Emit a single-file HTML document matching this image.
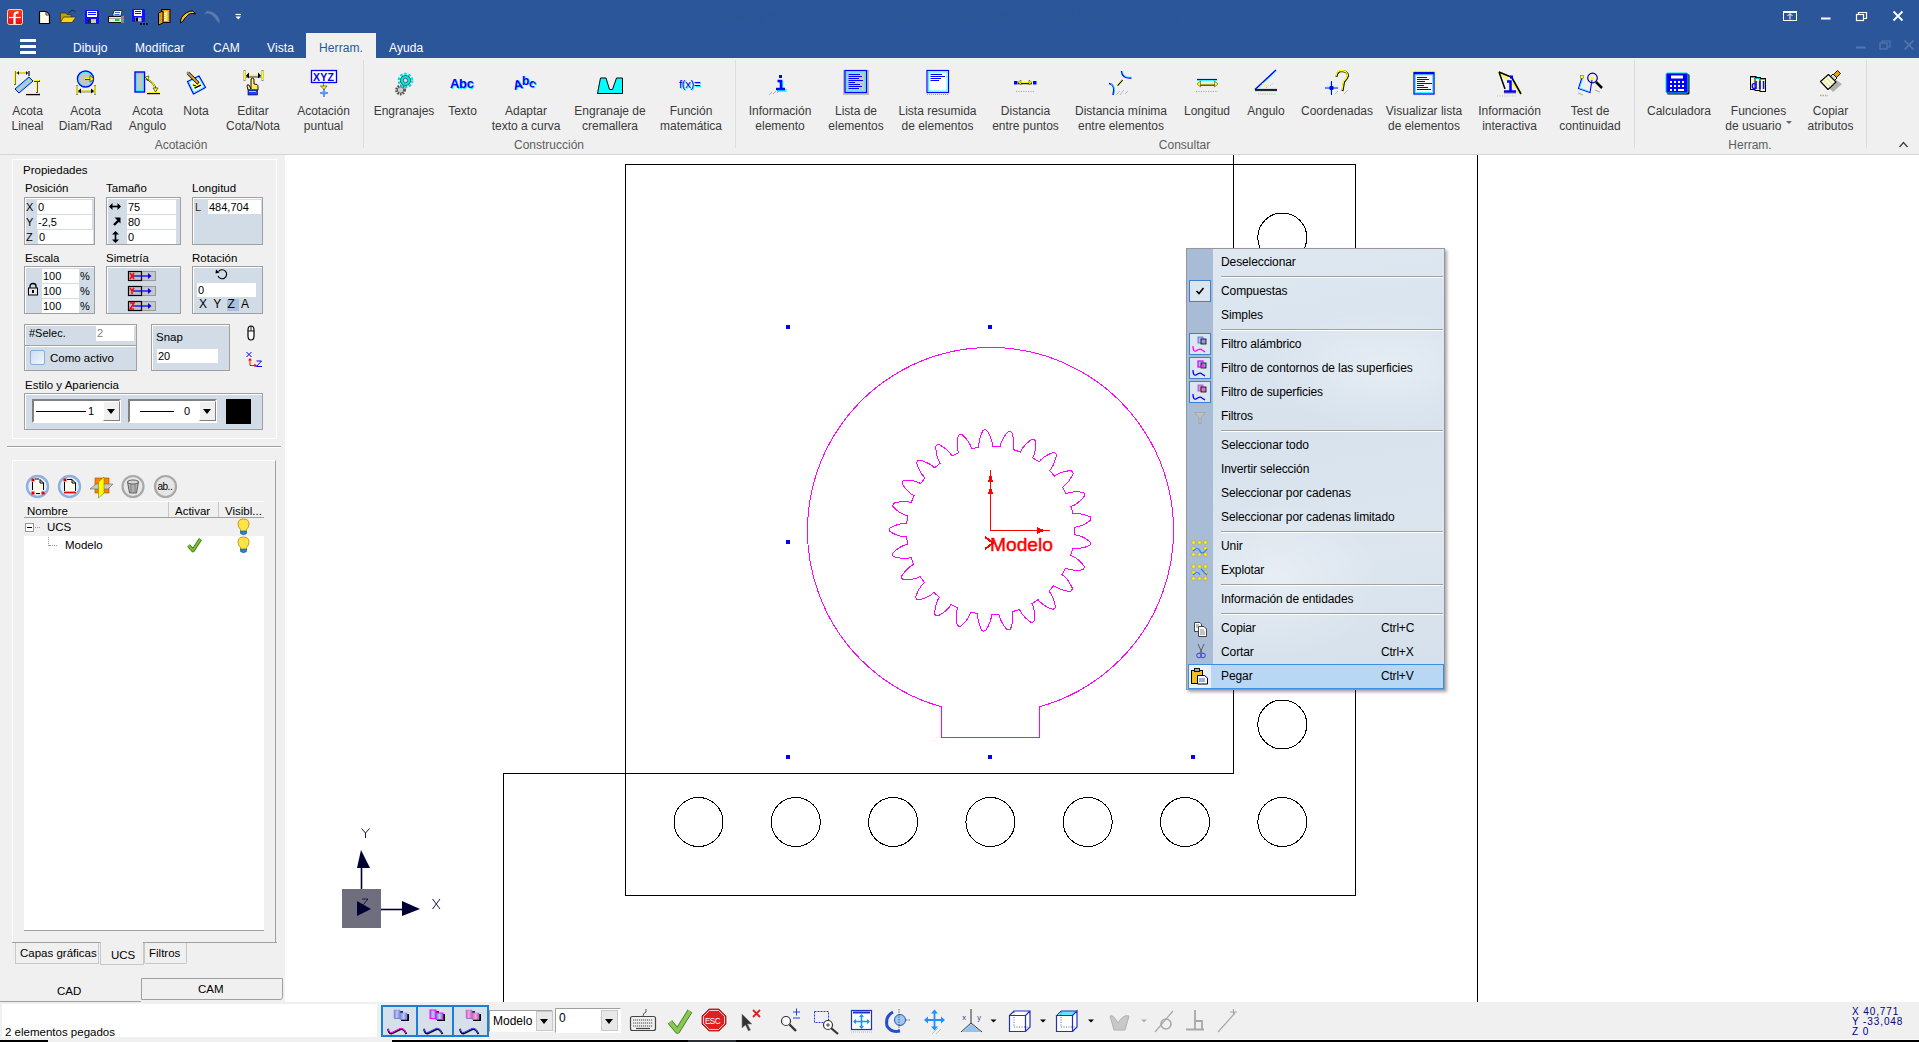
<!DOCTYPE html>
<html><head><meta charset="utf-8">
<style>
*{margin:0;padding:0;box-sizing:border-box}
html,body{width:1919px;height:1042px;overflow:hidden;background:#f0f0f0;font-family:"Liberation Sans",sans-serif;font-size:12px;color:#000;position:relative}
.a{position:absolute}
svg{overflow:visible}
#title{left:0;top:0;width:1919px;height:58px;background:#2b579a}
.mt{position:absolute;top:41px;color:#fff;font-size:12px;letter-spacing:0.1px;line-height:14px;white-space:nowrap}
#rib{left:0;top:58px;width:1919px;height:97px;background:#f0f0f0;border-bottom:1px solid #d5d5d5}
.bl{position:absolute;top:104px;color:#3a3a3a;font-size:12px;letter-spacing:0;line-height:15px;text-align:center;white-space:nowrap;width:200px;margin-left:-100px}
.gl{position:absolute;top:138px;color:#5e5e5e;font-size:12px;letter-spacing:0;line-height:14px;white-space:nowrap;text-align:center;width:200px;margin-left:-100px}
.sep{position:absolute;top:60px;width:1px;height:88px;background:#dcdcdc}
#draw{left:285px;top:155px;width:1634px;height:847px;background:#fff}
</style></head><body>
<div id="title" class="a"></div>
<div id="rib" class="a"></div>
<div id="draw" class="a"></div>

<!-- title bar icons -->
<svg class="a" style="left:0;top:0" width="260" height="58" viewBox="0 0 260 58">
<defs><linearGradient id="lg1" x1="0" y1="0" x2="0" y2="1"><stop offset="0" stop-color="#ff3a1a"/><stop offset="1" stop-color="#e01010"/></linearGradient></defs>
<rect x="7.5" y="9.5" width="15" height="15" rx="2" fill="url(#lg1)" stroke="#ffd0c0" stroke-width="1"/>
<path d="M9,17.5 H21" stroke="#fff" stroke-width="1.2"/>
<path d="M14.5,24 V15.5 Q14.5,12 18.5,12.5" fill="none" stroke="#fff" stroke-width="2.3"/>
<path d="M39.5,11.5 H46 L49.5,15 V23.5 H39.5 Z" fill="#fffde8" stroke="#000" stroke-width="1.2" stroke-linejoin="round"/>
<path d="M46,11.5 V15 H49.5 Z" fill="#fff" stroke="#000" stroke-width="0.8"/>
<path d="M60.5,13 H66 L67,14.5 H71 V22 H60.5 Z" fill="#c8a000" stroke="#333" stroke-width="0.8"/>
<path d="M60.5,22.5 L63.5,17 H76 L72,22.5 Z" fill="#f5d020" stroke="#333" stroke-width="0.8"/>
<path d="M69,13 Q72,8 75.5,12" fill="none" stroke="#222" stroke-width="1"/>
<rect x="85" y="10" width="14" height="14" rx="1" fill="#1010ff"/>
<rect x="87" y="11" width="10" height="6" fill="#fff"/>
<path d="M88,12.5 H96 M88,14.5 H96" stroke="#1010ff" stroke-width="1"/>
<rect x="88" y="19" width="8" height="4" fill="#ccc"/><rect x="88" y="19" width="3" height="4" fill="#222"/>
<path d="M112.5,16 L114,10.5 H122 L121,16 Z" fill="#fff" stroke="#222" stroke-width="0.9"/>
<path d="M115,12.5 H120 M114.5,14.5 H119.5" stroke="#2050e0" stroke-width="0.9"/>
<path d="M108.5,16.5 H123.5 V22.5 H108.5 Z" fill="#e8e8e8" stroke="#111" stroke-width="1"/>
<path d="M109,18.5 H123" stroke="#999" stroke-width="0.8"/>
<rect x="115" y="19" width="4.5" height="2" fill="#10e010"/>
<rect x="121" y="16" width="3" height="7" fill="#888"/>
<rect x="132" y="9" width="13" height="13" rx="1.2" fill="#1010ff"/>
<rect x="134" y="10" width="8" height="6" fill="#fff"/>
<path d="M135,11.5 H141 M135,13.5 H141" stroke="#1010ff" stroke-width="1"/>
<rect x="135" y="17.5" width="6.5" height="4" fill="#c8c8c8"/><rect x="135.5" y="17.5" width="2.5" height="4" fill="#000"/>
<rect x="140" y="23" width="1.8" height="1.8" fill="#000"/><rect x="143" y="23" width="1.8" height="1.8" fill="#000"/><rect x="146" y="23" width="1.8" height="1.8" fill="#000"/>
<rect x="161.5" y="9.5" width="8.5" height="13" fill="#f0a000" stroke="#000" stroke-width="1"/>
<rect x="164" y="11.5" width="3.5" height="9.5" fill="#fffbc0"/>
<path d="M164.5,12.5 h1 M166.5,13.5 h1 M164.5,14.5 h1 M166.5,15.5 h1 M164.5,16.5 h1 M166.5,17.5 h1 M164.5,18.5 h1 M166.5,19.5 h1" stroke="#d8b000" stroke-width="1"/>
<path d="M158.5,13 L163,11 V23 L158.5,25 Z" fill="#f0a000" stroke="#000" stroke-width="1"/>
<rect x="159.5" y="15" width="1.5" height="2" fill="#8090b0"/><rect x="159.5" y="19" width="1.5" height="2" fill="#8090b0"/>
<path d="M180.5,23 Q180,17 186,13 Q190,10.5 193,11 L195.5,14 L193,13.5 Q190,13 188,15 Q185,17.5 183,21 Z" fill="#f8c020" stroke="#000" stroke-width="1"/>
<path d="M219.5,23 Q220,17 214,13 Q210,10.5 207,11 L204.5,14 L207,13.5 Q210,13 212,15 Q215,17.5 217,21 Z" fill="#5a7db5" stroke="#4a6aa0" stroke-width="0.8"/>
<path d="M235.5,14.5 H241" stroke="#fff" stroke-width="1.2"/><path d="M235.5,16.5 H241 L238.25,19.5 Z" fill="#fff"/>
</svg>
<svg class="a" style="left:1770px;top:0" width="149" height="58" viewBox="1770 0 149 58">
<g fill="none" stroke="#fff" stroke-width="1">
<rect x="1783.5" y="11.5" width="13" height="9"/>
<path d="M1790,19.5 V14 M1787.5,16 L1790,13.5 L1792.5,16"/>
<path d="M1783.5,12.5 H1796.5" stroke-width="1"/>
</g>
<rect x="1821" y="17.5" width="9.5" height="2" fill="#fff"/>
<g fill="none" stroke="#fff" stroke-width="1.2">
<rect x="1856.5" y="14.5" width="7" height="6"/>
<path d="M1858.5,14.5 V12.5 H1866.5 V18.5 H1863.5"/>
</g>
<path d="M1893.5,11.5 L1902.5,20.5 M1902.5,11.5 L1893.5,20.5" stroke="#fff" stroke-width="1.8"/>
<g stroke="#5577b0" fill="none" stroke-width="1.2">
<path d="M1856,47.5 H1865.5" stroke-width="2"/>
<rect x="1880" y="43" width="7" height="6"/>
<path d="M1882,43 V41 H1890 V47 H1887"/>
<path d="M1904.5,40.5 L1913.5,49.5 M1913.5,40.5 L1904.5,49.5" stroke-width="1.6"/>
</g>
</svg>
<div class="a" style="left:715px;top:9px;font-size:12.5px;line-height:16px;color:#2d5594;white-space:nowrap;letter-spacing:0.2px">Nuevo archivo - Dibujo1 - (C:\USERS\CAD\DOCUMENTS\DIBUJOS\PIEZA.FSP)</div>
<!-- menu -->
<div class="a" style="left:20px;top:39px;width:16px;height:3px;background:#fff"></div>
<div class="a" style="left:20px;top:45px;width:16px;height:3px;background:#fff"></div>
<div class="a" style="left:20px;top:51px;width:16px;height:3px;background:#fff"></div>
<div class="a" style="left:306px;top:33px;width:70px;height:25px;background:#f0f0f0"></div>
<div class="mt" style="left:73px">Dibujo</div>
<div class="mt" style="left:135px">Modificar</div>
<div class="mt" style="left:213px">CAM</div>
<div class="mt" style="left:267px">Vista</div>
<div class="mt" style="left:319px;color:#2b579a">Herram.</div>
<div class="mt" style="left:389px">Ayuda</div>

<!-- ribbon labels -->
<div class="bl" style="left:27.5px">Acota<br>Lineal</div>
<div class="bl" style="left:85.5px">Acota<br>Diam/Rad</div>
<div class="bl" style="left:147.5px">Acota<br>Angulo</div>
<div class="bl" style="left:196px">Nota</div>
<div class="bl" style="left:253px">Editar<br>Cota/Nota</div>
<div class="bl" style="left:323.5px">Acotación<br>puntual</div>
<div class="gl" style="left:181px">Acotación</div>
<div class="sep" style="left:363px"></div>
<div class="bl" style="left:404px">Engranajes</div>
<div class="bl" style="left:462.5px">Texto</div>
<div class="bl" style="left:526px">Adaptar<br>texto a curva</div>
<div class="bl" style="left:610px">Engranaje de<br>cremallera</div>
<div class="bl" style="left:691px">Función<br>matemática</div>
<div class="gl" style="left:549px">Construcción</div>
<div class="sep" style="left:735px"></div>
<div class="bl" style="left:780px">Información<br>elemento</div>
<div class="bl" style="left:856px">Lista de<br>elementos</div>
<div class="bl" style="left:937.5px">Lista resumida<br>de elementos</div>
<div class="bl" style="left:1025.5px">Distancia<br>entre puntos</div>
<div class="bl" style="left:1121px">Distancia mínima<br>entre elementos</div>
<div class="bl" style="left:1207px">Longitud</div>
<div class="bl" style="left:1266px">Angulo</div>
<div class="bl" style="left:1337px">Coordenadas</div>
<div class="bl" style="left:1424px">Visualizar lista<br>de elementos</div>
<div class="bl" style="left:1509.5px">Información<br>interactiva</div>
<div class="bl" style="left:1590px">Test de<br>continuidad</div>
<div class="gl" style="left:1184.5px">Consultar</div>
<div class="sep" style="left:1634px"></div>
<div class="bl" style="left:1679px">Calculadora</div>
<div class="bl" style="left:1758.5px">Funciones<br>de usuario <span style="display:inline-block;width:0;height:0;border-left:3px solid transparent;border-right:3px solid transparent;border-top:3px solid #666;position:relative;top:-6px;margin-left:1px"></span></div>
<div class="bl" style="left:1830.5px">Copiar<br>atributos</div>
<div class="gl" style="left:1750px">Herram.</div>
<div class="sep" style="left:1866px"></div>
<svg class="a" style="left:0;top:58px" width="1919" height="97" viewBox="0 58 1919 97">
<path d="M1899.5,147 L1903.5,142.5 L1907.5,147" fill="none" stroke="#444" stroke-width="1.4"/>
<!-- Acota lineal -->
<g>
<path d="M15,85 V71 M15,73 H29 M29,71 V76" stroke="#666" stroke-width="2" fill="none"/>
<path d="M14.5,84 V71 M16,73 H28" stroke="#ff0" stroke-width="1.3" fill="none"/>
<path d="M17,73 l2,-2 v4 z M28,73 l-2,-2 v4z" fill="#000"/>
<path d="M15,89 L29,77 L33,81 L19,93 Z" fill="#c8c4c4" stroke="#0000ff" stroke-width="1"/>
<path d="M16.5,89 L29,78.5 L31.5,81 L19,91.5 Z" fill="none" stroke="#00ffff" stroke-width="0.8"/>
<path d="M34,81 H40 M37,82 V93 M26,94.5 H40" stroke="#000" stroke-width="1.3" fill="none"/>
<path d="M33.5,80.5 H39.5 M36.5,82 V92 M26,93.5 H39" stroke="#ff0" stroke-width="1" fill="none"/>
</g>
<!-- Diam/Rad -->
<g>
<circle cx="85.5" cy="79" r="8" fill="#c8c4c4" stroke="#0000ff" stroke-width="1.4"/>
<circle cx="85.5" cy="79" r="6.8" fill="none" stroke="#00ffff" stroke-width="0.8"/>
<path d="M85,79 H92" stroke="#000" stroke-width="1.6"/><path d="M85,78.5 H91" stroke="#ff0" stroke-width="1.2"/>
<path d="M90,75.5 L94,79 L90,82 Z" fill="#ff0" stroke="#000" stroke-width="0.5"/>
<path d="M77,85 V95 M95,85 V95 M78,91.5 H94" stroke="#888" stroke-width="2" fill="none"/>
<path d="M77,86 V94 M95,86 V94 M78,91 H94" stroke="#ff0" stroke-width="1.2" fill="none"/>
<path d="M78,91 l3,-2.5 v5z M94,91 l-3,-2.5 v5z" fill="#000"/>
</g>
<!-- Angulo -->
<g>
<rect x="135" y="72" width="9.5" height="20" fill="#c8c4c4" stroke="#0000ff" stroke-width="1.4"/>
<rect x="136.5" y="73.5" width="6.5" height="17" fill="none" stroke="#00ffff" stroke-width="0.9"/>
<path d="M146,79 Q155,82 156,91" fill="none" stroke="#000" stroke-width="1.8"/>
<path d="M146,78.5 Q154.5,81.5 155.5,90" fill="none" stroke="#ff0" stroke-width="1.1"/>
<path d="M145,77 l4,-1 -1,4z M153,88 h5 l-2.5,4z" fill="#ff0" stroke="#000" stroke-width="0.5"/>
<path d="M147,93.5 H160" stroke="#000" stroke-width="1.4"/><path d="M147,92.5 H160" stroke="#ff0" stroke-width="0.9"/>
</g>
<!-- Nota -->
<g>
<path d="M187.5,81.5 L199,76 L205.5,87.5 L193.5,94 Z" fill="#fafafa" stroke="#0000ff" stroke-width="1.3" stroke-linejoin="round"/>
<path d="M189,82 L198.5,77.5 L204,87 L194,92.5 Z" fill="none" stroke="#00ffff" stroke-width="0.8"/>
<path d="M193,84.5 L196,86 M194.5,88 L201,85" stroke="#000" stroke-width="1.6"/>
<path d="M192.5,83.5 L195.5,85 M194,87 L200.5,84" stroke="#ff0" stroke-width="1"/>
<path d="M188,73 L198.5,83.5" stroke="#000" stroke-width="3.2"/><path d="M188,73 L198,83" stroke="#f0a020" stroke-width="1.8"/>
<path d="M187,72 L189.5,74.5" stroke="#8090a0" stroke-width="2"/>
</g>
<!-- Editar cota -->
<g>
<path d="M244.5,70 V81 M262.5,70 V81" stroke="#888" stroke-width="2"/>
<path d="M244.5,71 V80 M262.5,71 V80 M246,75.5 H261" stroke="#ff0" stroke-width="1.4" fill="none"/>
<path d="M246,77 H261" stroke="#000" stroke-width="0.8"/>
<path d="M246,75.5 l3,-3 v6z M261,75.5 l-3,-3 v6z" fill="#000"/>
<path d="M251,89 V79 Q252.5,77 254,79 V84 L257,84.5 Q258,85 258,87 V90 H248 L247,86 Q247,84 249,85 Z" fill="#ffe860" stroke="#000" stroke-width="0.9"/>
<rect x="248" y="90" width="9.5" height="5" fill="#2040ff" stroke="#000" stroke-width="0.6"/>
<path d="M249,91.5 H256" stroke="#40ffff" stroke-width="1"/>
</g>
<!-- XYZ -->
<g>
<rect x="311.5" y="70.5" width="25" height="12" fill="#fff" stroke="#0000ff" stroke-width="1.3"/>
<text x="313" y="80.8" font-family="Liberation Sans" font-weight="bold" font-size="10.5" fill="#0000ff" letter-spacing="0.2">XYZ</text>
<path d="M323.5,83 V86 M320.5,86 H327 L324,89.5 Z" fill="#ff0" stroke="#444" stroke-width="0.7"/>
<path d="M324,89 V97 M320,93 H328" stroke="#0000ff" stroke-width="0.9"/><path d="M322,91 l4,4 M326,91 l-4,4" stroke="#00ffff" stroke-width="0.6"/>
</g>
<!-- Engranajes -->
<g>
<circle cx="400.5" cy="90" r="4.2" fill="none" stroke="#555" stroke-width="2.5" stroke-dasharray="1.6 1.1"/>
<circle cx="400.5" cy="90" r="3.2" fill="#ccc" stroke="#444" stroke-width="0.8"/>
<circle cx="405.5" cy="80.5" r="6.2" fill="none" stroke="#00e0e0" stroke-width="3.3" stroke-dasharray="2.3 1.6"/>
<circle cx="405.5" cy="80.5" r="5" fill="#00e8e8" stroke="#333" stroke-width="0.7"/>
<circle cx="405.5" cy="80.5" r="2.2" fill="#ddd" stroke="#333" stroke-width="0.7"/>
</g>
<!-- Abc -->
<text x="450.5" y="89" font-family="Liberation Sans" font-weight="bold" font-size="13" fill="#00ffff" letter-spacing="-0.3">Abc</text>
<text x="450" y="88.3" font-family="Liberation Sans" font-weight="bold" font-size="13" fill="#0000ff" letter-spacing="-0.3">Abc</text>
<!-- Adaptar texto -->
<g font-family="Liberation Sans" font-weight="bold">
<g fill="#00ffff" transform="translate(0.7,0.7)">
<text x="513" y="89" font-size="13" transform="rotate(-12 518 83)">A</text>
<text x="522" y="84.5" font-size="12">b</text>
<text x="529.5" y="88" font-size="12" transform="rotate(30 534 84)">c</text>
</g>
<g fill="#0000ff">
<text x="513" y="89" font-size="13" transform="rotate(-12 518 83)">A</text>
<text x="522" y="84.5" font-size="12">b</text>
<text x="529.5" y="88" font-size="12" transform="rotate(30 534 84)">c</text>
</g>
</g>
<!-- cremallera -->
<path d="M597.5,93.5 L600.5,78 H606 L609.5,89.5 H612.5 L616.5,78 H622.5 V93.5 Z" fill="#00ffff" stroke="#000" stroke-width="1"/>
<!-- f(x)= -->
<text x="679.5" y="88.5" font-family="Liberation Sans" font-size="11.5" fill="#00ffff" letter-spacing="-0.4">f(x)=</text>
<text x="679" y="88" font-family="Liberation Sans" font-size="11.5" fill="#0000ff" letter-spacing="-0.4">f(x)=</text>
<!-- i -->
<g>
<path d="M776.5,90 H786 M778,81.5 H781.5 V90" stroke="#00ffff" stroke-width="2.5" fill="none" transform="translate(0.6,0.6)"/>
<rect x="779" y="75" width="3" height="3" fill="#0000ff"/>
<path d="M776,89 H785 M777.5,81 H781 V89" stroke="#0000ff" stroke-width="2.5" fill="none"/>
<path d="M769,95 L772,92 M773,94 l3,-3 M777,93 l2,-2" stroke="#999" stroke-width="0.8"/>
</g>
<!-- Lista de elementos -->
<g>
<rect x="843" y="70" width="26" height="25" fill="#bbb"/>
<rect x="845" y="70.5" width="21.5" height="22" fill="#c8c8c8" stroke="#0000ff" stroke-width="1.2"/>
<rect x="846.5" y="72" width="18.5" height="19" fill="none" stroke="#00ffff" stroke-width="0.8"/>
<path d="M848.5,74.5 H860 M848.5,76.5 H862 M848.5,78.5 H859 M848.5,80.5 H863 M848.5,82.5 H855 M848.5,84.5 H860 M848.5,86.5 H862 M848.5,88.5 H859" stroke="#0000ff" stroke-width="1"/>
</g>
<!-- Lista resumida -->
<g>
<rect x="927" y="70.5" width="21.5" height="22" fill="#fff" stroke="#0000ff" stroke-width="1.2"/>
<rect x="928.5" y="72" width="18.5" height="19" fill="none" stroke="#00ffff" stroke-width="0.8"/>
<path d="M930.5,74.5 H942 M930.5,76.5 H945 M930.5,78.5 H941 M930.5,80.5 H939" stroke="#0000ff" stroke-width="1"/>
<path d="M927,94.5 H949" stroke="#999" stroke-width="1.2" stroke-dasharray="1 1"/>
</g>
<!-- Distancia entre puntos -->
<g>
<rect x="1014" y="81" width="3.5" height="3.5" fill="#0000ff"/><rect x="1033" y="81" width="3.5" height="3.5" fill="#0000ff"/>
<path d="M1018,83.5 H1032" stroke="#000" stroke-width="1.4"/><path d="M1018,82.5 H1032" stroke="#ff0" stroke-width="1.2"/>
<path d="M1018,82.5 l3,-2.5 v5z M1032,82.5 l-3,-2.5 v5z" fill="#ff0" stroke="#000" stroke-width="0.4"/>
<path d="M1016,91.5 H1034" stroke="#aaa" stroke-width="1" stroke-dasharray="1.2 1.2"/>
</g>
<!-- Distancia minima -->
<g fill="none">
<path d="M1121.5,71 Q1122,79 1131.5,78" stroke="#0000ff" stroke-width="1.5"/>
<path d="M1122.5,71 Q1123,78 1131,77" stroke="#00ffff" stroke-width="0.8"/>
<path d="M1109,83.5 Q1116,85 1113,95" stroke="#0000ff" stroke-width="1.5"/>
<path d="M1110,83.5 Q1116,86 1114,94" stroke="#00ffff" stroke-width="0.8"/>
<path d="M1117.5,85.5 L1122.5,80" stroke="#000" stroke-width="1.3"/><path d="M1117,85 L1122,79.5" stroke="#ff0" stroke-width="1"/>
<path d="M1116,95 l4,-4 M1120,95 l4,-5 M1125,94 l3,-3" stroke="#aaa" stroke-width="0.8"/>
</g>
<!-- Longitud -->
<g>
<path d="M1197,79.5 H1217" stroke="#0000ff" stroke-width="1.2"/><path d="M1197,80.6 H1217" stroke="#00ffff" stroke-width="0.8"/>
<path d="M1199,85 H1216" stroke="#000" stroke-width="1.3"/><path d="M1199,84 H1216" stroke="#ff0" stroke-width="1"/>
<path d="M1197,84 l3.5,-3 v6z M1218,84 l-3.5,-3 v6z" fill="#ff0" stroke="#000" stroke-width="0.4"/>
<path d="M1196,91.5 H1218" stroke="#aaa" stroke-width="1" stroke-dasharray="1.2 1.2"/>
</g>
<!-- Angulo -->
<g fill="none">
<path d="M1255,89.5 L1276,70" stroke="#0000ff" stroke-width="1.4"/><path d="M1256.5,89.5 L1276.5,71" stroke="#00ffff" stroke-width="0.7"/>
<path d="M1255,89.5 H1277" stroke="#0000ff" stroke-width="1.2"/><path d="M1255,90.6 H1277" stroke="#000" stroke-width="0.9"/>
<path d="M1262,83.5 Q1266,84 1266.5,88" stroke="#ff0" stroke-width="1.1"/>
<path d="M1266,88 l3,-3 M1270,86 l3,-3 M1258,94 H1276" stroke="#aaa" stroke-width="0.8" stroke-dasharray="1.2 1"/>
</g>
<!-- Coordenadas -->
<g>
<path d="M1331.5,81 V95 M1325,88 H1338" stroke="#0000ff" stroke-width="1"/>
<path d="M1330.5,82 V94 M1326,87 H1337" stroke="#00ffff" stroke-width="0.5"/>
<circle cx="1331.5" cy="88" r="2.3" fill="#0000ff"/>
<path d="M1336.5,77 Q1337,71 1342,71 Q1348,71.5 1348,76 Q1347,79 1344,82 L1342.5,91" fill="none" stroke="#000" stroke-width="2"/>
<path d="M1336,76.5 Q1336.5,70.5 1341.5,70.5 Q1347.5,71 1347.5,75.5 Q1346.5,78.5 1343.5,81.5 L1342,90" fill="none" stroke="#ff0" stroke-width="1.3"/>
<path d="M1335,94 l3,-3 M1344,94 l4,-4" stroke="#aaa" stroke-width="0.8"/>
</g>
<!-- Visualizar lista -->
<g>
<rect x="1411.5" y="70.5" width="25" height="25" fill="none" stroke="#ff0" stroke-width="1" stroke-dasharray="1 2.5"/>
<rect x="1414" y="72.5" width="20" height="21.5" fill="#fff" stroke="#0000ff" stroke-width="1.3"/>
<rect x="1414" y="72" width="20" height="2.5" fill="#0000ff"/>
<rect x="1415.5" y="75" width="17" height="17.5" fill="none" stroke="#00ffff" stroke-width="0.8"/>
<path d="M1417,77.5 H1427 M1417,79.5 H1429 M1417,81.5 H1425 M1417,83.5 H1432 M1417,85.5 H1424 M1417,87.5 H1428 M1417,89.5 H1431" stroke="#0000ff" stroke-width="1"/>
</g>
<!-- Info interactiva -->
<g>
<path d="M1498,71 L1520.5,91.5 L1509,92 L1503,92" fill="none" stroke="#ff0" stroke-width="1.6"/>
<path d="M1499,72 L1505,89 M1499,72 L1511,77" stroke="#000" stroke-width="1.5"/>
<path d="M1511.5,77 L1521,94" stroke="#000" stroke-width="1.6"/>
<rect x="1510" y="75.5" width="3" height="3" fill="#0000ff"/>
<path d="M1504,91.5 H1516 M1507,81.5 H1510.5 V91" stroke="#0000ff" stroke-width="2.5" fill="none"/>
<path d="M1504,93.5 H1516" stroke="#00ffff" stroke-width="1"/>
<path d="M1497,96 H1517" stroke="#bbb" stroke-width="1" stroke-dasharray="1 1.5"/>
</g>
<!-- Test continuidad -->
<g fill="none">
<path d="M1582,77.5 L1578.5,88.5 L1590,92.5 L1592,80" stroke="#0000ff" stroke-width="1.1"/>
<path d="M1583,78.5 L1579.5,88 L1589.5,91.5" stroke="#00ffff" stroke-width="0.8"/>
<rect x="1580.5" y="75.5" width="3" height="3" fill="#ff0" stroke="#333" stroke-width="0.4"/>
<circle cx="1592.5" cy="78" r="4.8" stroke="#00008b" stroke-width="1.2"/>
<rect x="1590.5" y="77" width="3" height="3" fill="#ff0"/>
<path d="M1596,82 L1602,88" stroke="#000" stroke-width="2.5"/>
<path d="M1578,93 l5,2 M1595,90 l5,2" stroke="#aaa" stroke-width="1"/>
</g>
<!-- Calculadora -->
<g>
<rect x="1667" y="74" width="22.5" height="20.5" rx="1.5" fill="#000"/>
<rect x="1666" y="73" width="22" height="20" rx="1.5" fill="#0000ff" stroke="#00e0e0" stroke-width="1"/>
<rect x="1671" y="75.5" width="12" height="3" fill="#fff"/>
<g fill="#fff"><rect x="1670" y="81" width="2" height="2"/><rect x="1674" y="81" width="2" height="2"/><rect x="1678" y="81" width="2" height="2"/><rect x="1682" y="81" width="2" height="2"/>
<rect x="1670" y="85" width="2" height="2"/><rect x="1674" y="85" width="2" height="2"/><rect x="1678" y="85" width="2" height="2"/><rect x="1682" y="85" width="2" height="2"/>
<rect x="1670" y="89" width="2" height="2"/><rect x="1674" y="89" width="2" height="2"/><rect x="1678" y="89" width="6" height="2"/></g>
</g>
<!-- Funciones de usuario -->
<g>
<rect x="1750.5" y="76.5" width="5.5" height="13" fill="#fffbd0" stroke="#000" stroke-width="1"/>
<rect x="1755" y="77.5" width="5.5" height="13" fill="#fffbd0" stroke="#000" stroke-width="1"/>
<rect x="1760" y="78.5" width="5.5" height="13" fill="#fffbd0" stroke="#000" stroke-width="1"/>
<path d="M1751,77.5 H1755 M1756,78.5 H1760 M1761,79.5 H1765" stroke="#00d0d0" stroke-width="1"/>
<text x="1751" y="89" font-family="Liberation Sans" font-weight="bold" font-size="10.5" fill="#0000ff" letter-spacing="0.8">dll</text>
</g>
<!-- Copiar atributos -->
<g>
<path d="M1836,80 L1842,84 L1833,92 L1829,88 Z" fill="#b0b0b0"/>
<path d="M1832.5,75.5 L1837.5,70.5 L1840.5,73.5 L1835.5,78.5 Z" fill="#f0a000" stroke="#000" stroke-width="0.9" stroke-linejoin="round"/>
<path d="M1830,77 L1833,74 L1837,78 L1834,81 Z" fill="#ddd" stroke="#000" stroke-width="0.9"/>
<path d="M1820.5,81.5 L1828.5,74.5 L1836,82 L1828,89.5 Z" fill="#fffbd0" stroke="#000" stroke-width="1.1" stroke-linejoin="round"/>
<path d="M1823.5,80 L1830.5,87 M1826,77.5 L1833,84.5" stroke="#c8c8a0" stroke-width="0.8"/>
<path d="M1818,92.5 H1826" stroke="#fff8b0" stroke-width="1.4" stroke-dasharray="1.5 1"/>
<path d="M1820,95.5 H1828" stroke="#aaa" stroke-width="1.4" stroke-dasharray="1.5 1"/>
</g>
</svg>

<style>
.pl{position:absolute;font-size:11.5px;line-height:13px;color:#000;white-space:nowrap}
.bx{position:absolute;background:#d2dce6;border:1px solid #a0a0a0;box-shadow:inset 1px 1px 0 #fff}
.fd{position:absolute;background:#fff;font-family:"Liberation Sans",sans-serif;font-size:11px;line-height:14px;padding-left:1px;color:#000;white-space:nowrap}
.lb{position:absolute;font-size:11px;line-height:14px;color:#000}
</style>
<!-- properties frame -->
<div class="a" style="left:12px;top:159px;width:265px;height:280px;border:1px solid #fff;border-left-color:#fff;border-top-color:#fff"></div>
<div class="pl" style="left:23px;top:164px">Propiedades</div>
<div class="pl" style="left:25px;top:182px">Posición</div>
<div class="pl" style="left:106px;top:182px">Tamaño</div>
<div class="pl" style="left:192px;top:182px">Longitud</div>
<div class="bx" style="left:24px;top:197px;width:71px;height:48px"></div>
<div class="fd" style="left:37px;top:200px;width:55px;height:14px">0</div>
<div class="fd" style="left:37px;top:215px;width:55px;height:14px">-2,5</div>
<div class="fd" style="left:38px;top:230px;width:55px;height:14px">0</div>
<div class="lb" style="left:26px;top:200px">X</div>
<div class="lb" style="left:26px;top:215px">Y</div>
<div class="lb" style="left:26px;top:230px">Z</div>
<div class="bx" style="left:106px;top:197px;width:75px;height:48px"></div>
<div class="fd" style="left:127px;top:200px;width:49px;height:14px">75</div>
<div class="fd" style="left:127px;top:215px;width:49px;height:14px">80</div>
<div class="fd" style="left:127px;top:230px;width:49px;height:14px">0</div>
<svg class="a" style="left:106px;top:197px" width="20" height="48" viewBox="0 0 20 48">
<path d="M4,9.5 H14" stroke="#000" stroke-width="1.6"/><path d="M3,9.5 l3.5,-3.5 v7z M15,9.5 l-3.5,-3.5 v7z" fill="#000"/>
<path d="M8,28 L13,23" stroke="#000" stroke-width="2.4"/><path d="M8.5,20.5 H14.5 V26.5 Z" fill="#000"/>
<path d="M9.5,35 V45" stroke="#000" stroke-width="1.6"/><path d="M9.5,34 l-3.5,3.5 h7z M9.5,46 l-3.5,-3.5 h7z" fill="#000"/>
</svg>
<div class="bx" style="left:192px;top:197px;width:71px;height:48px"></div>
<div class="fd" style="left:208px;top:200px;width:53px;height:14px">484,704</div>
<div class="lb" style="left:195px;top:200px;color:#4a2800">L</div>
<div class="pl" style="left:25px;top:252px">Escala</div>
<div class="pl" style="left:106px;top:252px">Simetría</div>
<div class="pl" style="left:192px;top:252px">Rotación</div>
<div class="bx" style="left:24px;top:266px;width:71px;height:48px"></div>
<div class="fd" style="left:42px;top:269px;width:37px;height:14px;text-align:left;padding-left:1px">100</div>
<div class="fd" style="left:42px;top:284px;width:37px;height:14px;text-align:left;padding-left:1px">100</div>
<div class="fd" style="left:42px;top:299px;width:37px;height:14px;text-align:left;padding-left:1px">100</div>
<div class="lb" style="left:80px;top:269px">%</div>
<div class="lb" style="left:80px;top:284px">%</div>
<div class="lb" style="left:80px;top:299px">%</div>
<svg class="a" style="left:27px;top:282px" width="12" height="14" viewBox="0 0 12 14">
<path d="M3,6 V4 Q3,1.5 6,1.5 Q9,1.5 9,4 V6" fill="none" stroke="#000" stroke-width="1.3"/>
<rect x="1.5" y="6" width="9" height="7" fill="#e8e8e8" stroke="#000" stroke-width="1"/>
<rect x="5" y="8" width="2" height="3" fill="#000"/>
</svg>
<div class="bx" style="left:106px;top:266px;width:75px;height:48px"></div>
<svg class="a" style="left:106px;top:266px" width="75" height="48" viewBox="106 266 75 48">
<g id="sym">
<rect x="128.5" y="271.5" width="27" height="9" fill="#c8c8c8" stroke="#999" stroke-width="1"/>
<rect x="128.5" y="271.5" width="13" height="9" fill="#c0c0c0" stroke="#000" stroke-width="1.2"/>
<path d="M133,276 H149" stroke="#0000ff" stroke-width="1.3"/><path d="M148,273 l3.5,3 -3.5,3z" fill="#0000ff"/>
</g>
<path d="M130,273 l4,6 M134,273 l-4,6" stroke="#f00" stroke-width="1.5"/>
<use href="#sym" y="15"/>
<path d="M130,288 l2,3 l2,-3 M132,291 v3.5" stroke="#f00" stroke-width="1.5" fill="none"/>
<use href="#sym" y="30"/>
<path d="M130,303 h4 l-4,6 h4" stroke="#f00" stroke-width="1.5" fill="none"/>
</svg>
<div class="bx" style="left:192px;top:266px;width:71px;height:48px"></div>
<svg class="a" style="left:214px;top:267px" width="16" height="14" viewBox="0 0 16 14">
<path d="M4.5,4.5 A4.5,4.5 0 1 1 4,9" fill="none" stroke="#000" stroke-width="1.1"/>
<path d="M2,2.5 L5.5,5.5 L1.5,6.5 Z" fill="#000"/>
</svg>
<div class="fd" style="left:197px;top:283px;width:59px;height:14px">0</div>
<div class="a" style="left:227px;top:299px;width:12px;height:12px;background:#a8c0e0"></div>
<div class="lb" style="left:199px;top:297px;font-size:12px;letter-spacing:6.2px">XYZA</div>
<!-- selec / snap -->
<div class="bx" style="left:24px;top:324px;width:113px;height:47px"></div>
<div class="a" style="left:25px;top:345px;width:111px;height:1px;background:#a0a0a0"></div>
<div class="a" style="left:25px;top:346px;width:111px;height:1px;background:#fff"></div>
<div class="lb" style="left:29px;top:326px">#Selec.</div>
<div class="fd" style="left:96px;top:326px;width:38px;height:15px;color:#808080">2</div>
<div class="a" style="left:30px;top:350px;width:15px;height:15px;border:1.5px solid #86aee0;border-radius:2px;background:linear-gradient(135deg,#c8dcf2,#f4f8fd)"></div>
<div class="lb" style="left:50px;top:351px;font-size:11.5px">Como activo</div>
<div class="bx" style="left:151px;top:324px;width:79px;height:47px"></div>
<div class="lb" style="left:156px;top:330px;font-size:11.5px">Snap</div>
<div class="fd" style="left:157px;top:349px;width:61px;height:14px">20</div>
<svg class="a" style="left:240px;top:324px" width="25" height="45" viewBox="240 324 25 45">
<path d="M248,330 Q248,326 251,326 Q254,326 254,330 V336 Q254,340 251,340 Q248,340 248,336 Z" fill="#fff" stroke="#000" stroke-width="1.2"/>
<path d="M251,326 V331 M248,331 H254" stroke="#000" stroke-width="0.9"/>
<path d="M246.5,352 l5,5 M251.5,352 l-5,5" stroke="#0000ff" stroke-width="1"/>
<path d="M250,359 V365.5 H256" stroke="#f00" stroke-width="1" fill="none"/><path d="M250,358 l-2,2.5 h4z M257,365.5 l-2.5,-2 v4z" fill="#f00"/>
<path d="M256.5,361 h5 l-5,5.5 h5.5" stroke="#0000ff" stroke-width="1" fill="none"/>
</svg>
<div class="pl" style="left:25px;top:379px">Estilo y Apariencia</div>
<div class="bx" style="left:24px;top:393px;width:239px;height:37px"></div>
<div class="a" style="left:32px;top:399px;width:89px;height:24px;background:#fff;border:2px solid;border-color:#808080 #fff #fff #808080"></div>
<div class="a" style="left:36px;top:411px;width:50px;height:1px;background:#000"></div>
<div class="lb" style="left:88px;top:404px">1</div>
<div class="a" style="left:103px;top:401px;width:17px;height:20px;background:#f0f0f0;border:1px solid;border-color:#fff #808080 #808080 #fff"></div>
<div class="a" style="left:107px;top:409px;border-left:4.5px solid transparent;border-right:4.5px solid transparent;border-top:5px solid #000"></div>
<div class="a" style="left:128px;top:399px;width:89px;height:24px;background:#fff;border:2px solid;border-color:#808080 #fff #fff #808080"></div>
<div class="a" style="left:140px;top:411px;width:34px;height:1px;background:#000"></div>
<div class="lb" style="left:184px;top:404px">0</div>
<div class="a" style="left:199px;top:401px;width:17px;height:20px;background:#f0f0f0;border:1px solid;border-color:#fff #808080 #808080 #fff"></div>
<div class="a" style="left:203px;top:409px;border-left:4.5px solid transparent;border-right:4.5px solid transparent;border-top:5px solid #000"></div>
<div class="a" style="left:226px;top:399px;width:25px;height:25px;background:#000"></div>
<!-- separator -->
<div class="a" style="left:7px;top:446px;width:274px;height:1px;background:#a0a0a0"></div>
<div class="a" style="left:7px;top:447px;width:274px;height:1px;background:#fff"></div>
<!-- layers frame -->
<div class="a" style="left:12px;top:460px;width:264px;height:483px;border:1px solid;border-color:#fff #a0a0a0 #a0a0a0 #fff"></div>
<svg class="a" style="left:20px;top:470px" width="170" height="32" viewBox="20 470 170 32">
<circle cx="37.5" cy="486.5" r="10.5" fill="#e4eefa" stroke="#8eb0e0" stroke-width="2.4"/>
<path d="M32.5,479.5 H40 L43.5,483 V493.5 H32.5 Z" fill="#fffff0"/>
<path d="M32.5,482 V490 M40,479.5 L43.5,483 V490 M40,479.5 V483 H43.5 M36,493.5 H40" fill="none" stroke="#000" stroke-width="1"/>
<rect x="31.5" y="478.5" width="3" height="3" fill="#e00"/><rect x="31.5" y="491.5" width="3" height="3" fill="#e00"/><rect x="41.5" y="491.5" width="3" height="3" fill="#e00"/><rect x="35" y="478.5" width="4" height="1" fill="#000"/>
<circle cx="69.5" cy="486.5" r="10.5" fill="#e4eefa" stroke="#8eb0e0" stroke-width="2.4"/>
<path d="M64.5,479.5 H72 L75.5,483 V492 H64.5 Z" fill="#fffff0"/>
<path d="M64.5,482 V491 M67,479.5 H72 L75.5,483 V491 M72,479.5 V483 H75.5" fill="none" stroke="#000" stroke-width="1"/>
<rect x="63.5" y="478.5" width="3" height="3" fill="#e00"/><path d="M64,492.5 H76" stroke="#e00" stroke-width="1.8"/>
<rect x="95" y="478" width="14" height="15" fill="#ff8000" stroke="#a05000" stroke-width="0.6"/>
<path d="M90,489 L96,484 H113 L108,489 Z" fill="#c8c8c8" stroke="#666" stroke-width="0.6"/>
<path d="M98.5,482 L104,477 V493 L98.5,498 Z" fill="#ffff00" stroke="#808000" stroke-width="0.6"/>
<circle cx="133" cy="486.5" r="10.5" fill="#e6e6e6" stroke="#a8a8a8" stroke-width="2.2"/>
<path d="M127.5,482 H138.5 L136.5,493 H129.5 Z" fill="#b0b0b0" stroke="#555" stroke-width="0.9"/>
<ellipse cx="133" cy="482" rx="5.5" ry="2" fill="#d8d8d8" stroke="#555" stroke-width="0.9"/>
<path d="M131,484 V492 M135,484 V492" stroke="#777" stroke-width="0.8"/>
<circle cx="165.5" cy="486.5" r="10.5" fill="#e6e6e6" stroke="#a8a8a8" stroke-width="2.2"/>
<text x="157.5" y="490" font-family="Liberation Sans" font-size="10" fill="#000" letter-spacing="-0.5">ab..</text>
</svg>
<!-- header -->
<div class="a" style="left:24px;top:501px;width:240px;height:1px;background:#fff"></div>
<div class="a" style="left:24px;top:502px;width:240px;height:15px;background:#f0f0f0"></div>
<div class="a" style="left:24px;top:517px;width:240px;height:1px;background:#a0a0a0"></div>
<div class="a" style="left:168px;top:502px;width:1px;height:15px;background:#c8c8c8"></div>
<div class="a" style="left:218px;top:502px;width:1px;height:15px;background:#c8c8c8"></div>
<div class="pl" style="left:27px;top:505px;font-size:11.5px">Nombre</div>
<div class="pl" style="left:175px;top:505px;font-size:11.5px">Activar</div>
<div class="pl" style="left:225px;top:505px;font-size:11.5px">Visibl...</div>
<div class="a" style="left:24px;top:518px;width:240px;height:18px;background:#f0f0f0"></div>
<div class="a" style="left:24px;top:536px;width:240px;height:394px;background:#fff"></div>
<div class="a" style="left:24px;top:930px;width:240px;height:1px;background:#a0a0a0"></div>
<div class="a" style="left:25px;top:523px;width:9px;height:9px;border:1px solid #999;background:#fff"></div>
<div class="a" style="left:27px;top:527px;width:5px;height:1px;background:#000"></div>
<div class="a" style="left:35px;top:527px;width:5px;height:1px;border-top:1px dotted #999"></div>
<div class="pl" style="left:47px;top:521px;font-size:11.5px">UCS</div>
<div class="a" style="left:48px;top:537px;width:1px;height:9px;border-left:1px dotted #999"></div>
<div class="a" style="left:49px;top:545px;width:8px;height:1px;border-top:1px dotted #999"></div>
<div class="pl" style="left:65px;top:539px;font-size:11.5px">Modelo</div>
<svg class="a" style="left:185px;top:518px" width="70" height="40" viewBox="185 518 70 40">
<path d="M188.5,545.5 L193,550.5 L200.5,539" fill="none" stroke="#3a7010" stroke-width="3.6" stroke-linejoin="round"/>
<path d="M188.5,545.5 L193,550.5 L200.5,539" fill="none" stroke="#78c030" stroke-width="2.2" stroke-linejoin="round"/>
<g id="bulb"><path d="M243.5,519 Q249,519 249,524 Q249,527 246.5,529.5 V531.5 H240.5 V529.5 Q238,527 238,524 Q238,519 243.5,519 Z" fill="#ffe448" stroke="#c09000" stroke-width="0.9"/>
<path d="M240.5,531 H246.5 V533.5 Q243.5,536 240.5,533.5 Z" fill="#2a80e0" stroke="#1050a0" stroke-width="0.6"/></g>
<use href="#bulb" y="18"/>
</svg>
<!-- bottom tabs -->
<div class="a" style="left:15px;top:942px;width:84px;height:22px;border:1px solid #c8c8c8;border-top:none;background:#f0f0f0"></div>
<div class="a" style="left:100px;top:942px;width:44px;height:23px;border:1px solid #c8c8c8;border-top:none;background:#f0f0f0"></div>
<div class="a" style="left:144px;top:942px;width:43px;height:22px;border:1px solid #c8c8c8;border-top:none;border-radius:0 0 2px 2px;background:#f0f0f0"></div>
<div class="a" style="left:12px;top:942px;width:88px;height:1px;background:#a0a0a0"></div>
<div class="a" style="left:143px;top:942px;width:134px;height:1px;background:#a0a0a0"></div>
<div class="pl" style="left:20px;top:947px;font-size:11.5px">Capas gráficas</div>
<div class="pl" style="left:111px;top:949px;font-size:11.5px">UCS</div>
<div class="pl" style="left:149px;top:947px;font-size:11.5px">Filtros</div>
<!-- CAD/CAM -->
<div class="a" style="left:0;top:978px;width:285px;height:1px;background:transparent"></div>
<div class="a" style="left:141px;top:978px;width:142px;height:22px;border:1px solid #a0a0a0;border-radius:0 0 3px 0;background:#f0f0f0"></div>
<div class="a" style="left:0px;top:1001px;width:141px;height:1px;background:#a0a0a0"></div>
<div class="pl" style="left:57px;top:985px;font-size:11.5px">CAD</div>
<div class="pl" style="left:198px;top:983px;font-size:11.5px">CAM</div>

<svg class="a" style="left:285px;top:155px;overflow:hidden" width="1634" height="847" viewBox="285 155 1634 847">
<g fill="none" stroke="#000" stroke-width="1" shape-rendering="crispEdges">
<rect x="625.5" y="164.5" width="730" height="731"/>
<polyline points="1233.5,150 1233.5,773.5 503.5,773.5 503.5,1010"/>
<line x1="1477.5" y1="150" x2="1477.5" y2="1010"/>
</g>
<g fill="none" stroke="#000" stroke-width="1" shape-rendering="crispEdges"><circle cx="698.5" cy="822.0" r="24.5"/><circle cx="795.8" cy="822.0" r="24.5"/><circle cx="893.1" cy="822.0" r="24.5"/><circle cx="990.4" cy="822.0" r="24.5"/><circle cx="1087.7" cy="822.0" r="24.5"/><circle cx="1185.0" cy="822.0" r="24.5"/><circle cx="1282.3" cy="822.0" r="24.5"/><circle cx="1282.3" cy="237.5" r="24.5"/><circle cx="1282.3" cy="334.9" r="24.5"/><circle cx="1282.3" cy="432.3" r="24.5"/><circle cx="1282.3" cy="529.7" r="24.5"/><circle cx="1282.3" cy="627.1" r="24.5"/><circle cx="1282.3" cy="724.5" r="24.5"/></g>
<g fill="none" stroke="#f0f" stroke-width="1" shape-rendering="crispEdges">
<path d="M941.5,706.8 A183,183 0 1 1 1039.5,706.8 L1039.5,737.5 L941.5,737.5 Z"/>
<path d="M978.9,447.3 L978.8,444.5 L979.1,441.7 L979.7,438.9 L980.5,436.0 L981.7,433.2 L983.1,430.3 L984.8,429.9 L986.6,430.1 L988.3,432.8 L989.7,435.5 L990.9,438.3 L991.8,441.0 L992.4,443.8 L992.6,446.5 L994.5,446.6 L996.3,446.7 L998.1,446.8 L999.9,447.0 L1000.6,444.3 L1001.5,441.7 L1002.8,439.1 L1004.4,436.5 L1006.2,434.0 L1008.2,431.6 L1010.0,431.6 L1011.7,432.3 L1012.6,435.3 L1013.3,438.3 L1013.8,441.2 L1014.0,444.1 L1013.9,447.0 L1013.4,449.7 L1015.2,450.2 L1016.9,450.8 L1018.7,451.4 L1020.4,452.0 L1021.7,449.5 L1023.3,447.2 L1025.2,445.0 L1027.3,442.9 L1029.7,440.9 L1032.3,439.1 L1034.0,439.6 L1035.4,440.6 L1035.6,443.8 L1035.6,446.9 L1035.3,449.8 L1034.7,452.7 L1033.9,455.4 L1032.8,457.9 L1034.4,458.9 L1035.9,459.9 L1037.5,460.9 L1039.0,461.9 L1040.8,459.8 L1043.0,458.0 L1045.3,456.3 L1047.9,454.8 L1050.7,453.5 L1053.7,452.3 L1055.2,453.2 L1056.4,454.6 L1055.8,457.7 L1054.9,460.7 L1053.9,463.5 L1052.7,466.1 L1051.2,468.6 L1049.5,470.7 L1050.8,472.0 L1052.1,473.4 L1053.3,474.7 L1054.5,476.1 L1056.8,474.6 L1059.3,473.3 L1062.1,472.3 L1064.9,471.5 L1068.0,470.9 L1071.1,470.5 L1072.4,471.8 L1073.2,473.4 L1071.8,476.2 L1070.3,478.9 L1068.6,481.4 L1066.7,483.6 L1064.7,485.6 L1062.5,487.3 L1063.5,488.9 L1064.4,490.5 L1065.2,492.1 L1066.0,493.7 L1068.6,492.8 L1071.4,492.2 L1074.3,491.9 L1077.3,491.8 L1080.4,492.0 L1083.5,492.4 L1084.4,494.0 L1084.8,495.7 L1082.7,498.2 L1080.6,500.4 L1078.3,502.3 L1076.0,504.1 L1073.6,505.5 L1071.0,506.6 L1071.5,508.3 L1072.0,510.1 L1072.4,511.9 L1072.8,513.7 L1075.6,513.4 L1078.4,513.6 L1081.3,514.0 L1084.2,514.6 L1087.1,515.6 L1090.1,516.8 L1090.6,518.5 L1090.5,520.3 L1087.9,522.1 L1085.3,523.7 L1082.6,525.1 L1079.9,526.1 L1077.2,526.9 L1074.4,527.3 L1074.5,529.2 L1074.5,531.0 L1074.5,532.8 L1074.4,534.7 L1077.1,535.1 L1079.8,535.9 L1082.5,537.0 L1085.2,538.4 L1087.8,540.1 L1090.3,542.0 L1090.4,543.7 L1089.9,545.4 L1086.9,546.6 L1084.0,547.5 L1081.0,548.1 L1078.2,548.5 L1075.3,548.6 L1072.6,548.3 L1072.2,550.1 L1071.7,551.9 L1071.2,553.7 L1070.7,555.4 L1073.3,556.5 L1075.7,558.0 L1078.0,559.7 L1080.2,561.7 L1082.3,564.0 L1084.4,566.4 L1084.0,568.2 L1083.0,569.7 L1079.9,570.1 L1076.8,570.2 L1073.8,570.1 L1070.9,569.8 L1068.2,569.1 L1065.6,568.2 L1064.7,569.8 L1063.9,571.4 L1063.0,573.0 L1062.0,574.6 L1064.2,576.3 L1066.2,578.3 L1068.0,580.6 L1069.6,583.1 L1071.1,585.7 L1072.5,588.6 L1071.7,590.2 L1070.4,591.5 L1067.2,591.1 L1064.2,590.4 L1061.3,589.6 L1058.6,588.5 L1056.1,587.2 L1053.8,585.7 L1052.6,587.0 L1051.4,588.4 L1050.1,589.7 L1048.8,591.0 L1050.5,593.2 L1051.9,595.6 L1053.1,598.3 L1054.1,601.1 L1054.9,604.1 L1055.4,607.2 L1054.3,608.6 L1052.7,609.4 L1049.8,608.2 L1047.0,606.9 L1044.4,605.3 L1042.1,603.6 L1040.0,601.8 L1038.1,599.7 L1036.6,600.7 L1035.1,601.7 L1033.5,602.7 L1031.9,603.6 L1033.0,606.1 L1033.8,608.8 L1034.3,611.7 L1034.5,614.7 L1034.6,617.8 L1034.3,620.9 L1032.9,622.0 L1031.1,622.4 L1028.6,620.5 L1026.2,618.5 L1024.1,616.4 L1022.3,614.2 L1020.7,611.8 L1019.4,609.4 L1017.7,610.0 L1016.0,610.5 L1014.2,611.1 L1012.5,611.6 L1012.9,614.3 L1012.9,617.1 L1012.7,620.0 L1012.2,623.0 L1011.5,626.0 L1010.5,629.0 L1008.8,629.6 L1007.0,629.6 L1005.0,627.2 L1003.2,624.6 L1001.7,622.1 L1000.5,619.4 L999.5,616.8 L998.9,614.1 L997.1,614.2 L995.3,614.4 L993.4,614.4 L991.6,614.5 L991.3,617.2 L990.7,620.0 L989.7,622.7 L988.5,625.5 L987.1,628.2 L985.3,630.9 L983.6,631.1 L981.8,630.6 L980.5,627.7 L979.4,624.8 L978.6,622.0 L978.0,619.1 L977.8,616.3 L977.9,613.5 L976.1,613.2 L974.3,612.9 L972.5,612.5 L970.7,612.1 L969.7,614.7 L968.4,617.2 L966.8,619.7 L965.0,622.0 L962.9,624.3 L960.5,626.4 L958.8,626.2 L957.2,625.3 L956.6,622.2 L956.3,619.1 L956.2,616.1 L956.4,613.2 L956.8,610.4 L957.6,607.8 L955.9,607.1 L954.3,606.3 L952.6,605.5 L951.0,604.6 L949.4,606.9 L947.5,609.0 L945.4,611.0 L943.0,612.8 L940.4,614.5 L937.6,616.0 L936.0,615.3 L934.7,614.1 L934.9,610.9 L935.3,607.8 L936.0,604.9 L936.9,602.2 L938.0,599.6 L939.4,597.2 L938.0,596.1 L936.6,594.9 L935.2,593.7 L933.8,592.5 L931.7,594.3 L929.4,595.9 L926.8,597.2 L924.1,598.4 L921.1,599.4 L918.0,600.1 L916.6,599.1 L915.6,597.6 L916.6,594.5 L917.8,591.7 L919.2,589.0 L920.7,586.6 L922.5,584.3 L924.4,582.4 L923.3,580.9 L922.2,579.5 L921.2,578.0 L920.2,576.4 L917.7,577.7 L915.0,578.6 L912.2,579.3 L909.3,579.7 L906.2,579.9 L903.0,579.9 L901.9,578.5 L901.3,576.8 L903.0,574.1 L904.9,571.7 L906.9,569.4 L909.0,567.5 L911.2,565.7 L913.6,564.3 L912.9,562.6 L912.2,560.9 L911.6,559.2 L911.0,557.5 L908.3,558.1 L905.4,558.3 L902.5,558.3 L899.6,558.0 L896.5,557.4 L893.4,556.6 L892.7,555.0 L892.6,553.2 L894.9,551.0 L897.3,549.1 L899.8,547.4 L902.4,546.0 L905.0,544.9 L907.6,544.1 L907.3,542.3 L907.1,540.5 L906.9,538.7 L906.7,536.9 L904.0,536.8 L901.2,536.3 L898.4,535.5 L895.6,534.5 L892.8,533.2 L890.0,531.6 L889.7,529.9 L890.0,528.1 L892.8,526.6 L895.6,525.3 L898.5,524.3 L901.3,523.6 L904.1,523.2 L906.8,523.1 L907.0,521.3 L907.2,519.5 L907.5,517.6 L907.8,515.8 L905.1,515.0 L902.6,513.9 L900.0,512.5 L897.6,510.8 L895.2,508.8 L892.9,506.6 L893.0,504.8 L893.8,503.2 L896.9,502.4 L899.9,501.9 L902.9,501.6 L905.8,501.6 L908.6,501.9 L911.3,502.5 L911.9,500.8 L912.6,499.1 L913.3,497.4 L914.0,495.7 L911.7,494.3 L909.4,492.6 L907.4,490.5 L905.4,488.3 L903.6,485.8 L901.9,483.1 L902.5,481.4 L903.6,480.0 L906.8,480.0 L909.9,480.3 L912.8,480.8 L915.6,481.5 L918.3,482.4 L920.7,483.7 L921.8,482.2 L922.8,480.7 L923.9,479.2 L925.1,477.8 L923.1,475.8 L921.4,473.6 L919.9,471.1 L918.6,468.4 L917.4,465.6 L916.5,462.5 L917.4,461.1 L918.9,460.0 L922.0,460.8 L924.9,461.8 L927.6,463.0 L930.2,464.4 L932.5,466.0 L934.6,467.8 L935.9,466.6 L937.4,465.5 L938.8,464.3 L940.2,463.2 L938.9,460.8 L937.8,458.2 L936.9,455.4 L936.3,452.5 L935.9,449.4 L935.7,446.3 L937.0,445.1 L938.7,444.4 L941.5,445.9 L944.0,447.6 L946.4,449.5 L948.5,451.5 L950.4,453.6 L951.9,455.9 L953.5,455.1 L955.2,454.3 L956.9,453.5 L958.6,452.8 L957.8,450.1 L957.4,447.3 L957.2,444.5 L957.4,441.5 L957.7,438.4 L958.4,435.3 L959.9,434.4 L961.7,434.2 L964.0,436.4 L966.1,438.7 L967.9,441.1 L969.5,443.5 L970.7,446.0 L971.7,448.6 L973.5,448.2 L975.3,447.9 L977.1,447.6 Z"/>
</g>
<g fill="#00f"><rect x="786" y="325" width="4" height="4"/><rect x="988" y="325" width="4" height="4"/><rect x="1191" y="325" width="4" height="4"/><rect x="786" y="540" width="4" height="4"/><rect x="1191" y="540" width="4" height="4"/><rect x="786" y="755" width="4" height="4"/><rect x="988" y="755" width="4" height="4"/><rect x="1191" y="755" width="4" height="4"/></g>
<g stroke="#f00" fill="#f00" shape-rendering="crispEdges">
<line x1="990.5" y1="470" x2="990.5" y2="531" stroke-width="1.2"/>
<line x1="990" y1="530.5" x2="1050" y2="530.5" stroke-width="1.2"/>
<path d="M990.5,473 L993,481.5 L988,481.5 Z M990.5,485.5 L993,494 L988,494 Z" stroke="none"/>
<path d="M1037,527 L1045,530.5 L1037,534 Z" stroke="none"/>
<path d="M985,537 L993,543 L985,549" fill="none" stroke-width="2"/>
</g>
<text x="990" y="551" fill="#f00" font-family="Liberation Sans" font-size="19.2" stroke="#f00" stroke-width="0.45">Modelo</text>
<g fill="#000033" stroke="#000033">
<rect x="342" y="889" width="39" height="39" fill="#6f6e7e" stroke="none"/>
<line x1="361.5" y1="867" x2="361.5" y2="889" stroke-width="1.6"/>
<path d="M361,850 L370,868 L357,868 Z" stroke="none"/>
<line x1="381" y1="909.5" x2="403" y2="909.5" stroke-width="1.6"/>
<path d="M402,901 L420,909 L402,916 Z" stroke="none"/>
<path d="M357,901 L371,909 L357,916 Z" stroke="none"/>
<path d="M362,899 L368,899 L363,905" fill="none" stroke-width="0.8"/>
<path d="M361.5,828.5 L365.5,833 L369.5,828.5 M365.5,833 L365.5,838" fill="none" stroke-width="0.9"/>
<path d="M432.5,899 L440,909 M440,899 L432.5,909" fill="none" stroke-width="0.9"/>
</g>
</svg>
<style>
#cm{position:absolute;left:1186px;top:248px;width:259px;height:442px;border:1px solid #979797;
background:radial-gradient(ellipse 120px 60px at 200px 120px,rgba(255,255,255,.35),rgba(255,255,255,0)),radial-gradient(ellipse 100px 80px at 90px 330px,rgba(255,255,255,.3),rgba(255,255,255,0)),linear-gradient(170deg,#dfe8f1 0%,#d7e2ed 40%,#dde6ef 70%,#d3dfeb 100%);
box-shadow:2px 2px 3px rgba(0,0,0,.35)}
#cm .ic{position:absolute;left:0;top:0;width:26px;height:440px;background:#a9bcd5}
.mi{position:absolute;left:34px;font-size:12px;line-height:24px;height:24px;color:#000;white-space:nowrap;letter-spacing:-0.1px}
.ms{position:absolute;left:34px;width:222px;height:2px;background:#a0a0a0;border-bottom:1px solid #fff}
.sc{position:absolute;left:194px;font-size:12px;line-height:24px;color:#000;letter-spacing:-0.2px}
</style>
<div id="cm">
<div class="ic"></div>
<div class="mi" style="top:1px">Deseleccionar</div>
<div class="ms" style="top:27px"></div>
<div class="a" style="left:2px;top:31px;width:22px;height:22px;border:1px solid #3d80d0;background:#dbe6f1"></div>
<svg class="a" style="left:8px;top:37px" width="10" height="10" viewBox="0 0 10 10"><path d="M1.5,5 L4,7.5 L8.5,2" fill="none" stroke="#000" stroke-width="1.6"/></svg>
<div class="mi" style="top:30px">Compuestas</div>
<div class="mi" style="top:54px">Simples</div>
<div class="ms" style="top:80px"></div>
<div class="a" style="left:2px;top:84px;width:22px;height:22px;border:1px solid #3d80d0;background:#dbe6f1"></div>
<div class="a" style="left:2px;top:108px;width:22px;height:22px;border:1px solid #3d80d0;background:#dbe6f1"></div>
<div class="a" style="left:2px;top:132px;width:22px;height:22px;border:1px solid #3d80d0;background:#dbe6f1"></div>
<svg class="a" style="left:0;top:84px" width="26" height="72" viewBox="0 0 26 72">
<g id="flt1">
<rect x="11" y="4" width="5" height="6" fill="#b0b8f0" stroke="#6060d0" stroke-width="0.8"/>
<rect x="14" y="6" width="5" height="5" fill="#9098e0" stroke="#000" stroke-width="0.8"/>
</g>
<path d="M6,13 Q6,19 9,18 Q13,15 15,17 L18,19" fill="none" stroke="#ff00ff" stroke-width="1.3"/>
<use href="#flt1" y="24"/>
<rect x="11" y="28" width="5" height="6" fill="none" stroke="#ff00ff" stroke-width="1"/>
<path d="M6,37 Q6,43 9,42 Q13,39 15,41 L18,43" fill="none" stroke="#0000ff" stroke-width="1.3"/>
<rect x="11" y="52" width="5" height="6" fill="#f080d0" stroke="#8060d0" stroke-width="0.8"/>
<rect x="14" y="54" width="5" height="5" fill="#e070c0" stroke="#000" stroke-width="0.8"/>
<path d="M6,61 Q6,67 9,66 Q13,63 15,65 L18,67" fill="none" stroke="#0000ff" stroke-width="1.3"/>
</svg>
<div class="mi" style="top:83px">Filtro alámbrico</div>
<div class="mi" style="top:107px">Filtro de contornos de las superficies</div>
<div class="mi" style="top:131px">Filtro de superficies</div>
<svg class="a" style="left:6px;top:162px" width="14" height="14" viewBox="0 0 14 14"><path d="M1.5,1.5 H12.5 L8,6.5 V12.5 H6 V6.5 Z" fill="#c0c0c0" stroke="#a0a0a0" stroke-width="0.8"/></svg>
<div class="mi" style="top:155px">Filtros</div>
<div class="ms" style="top:181px"></div>
<div class="mi" style="top:184px">Seleccionar todo</div>
<div class="mi" style="top:208px">Invertir selección</div>
<div class="mi" style="top:232px">Seleccionar por cadenas</div>
<div class="mi" style="top:256px">Seleccionar por cadenas limitado</div>
<div class="ms" style="top:282px"></div>
<svg class="a" style="left:3px;top:290px" width="20" height="40" viewBox="0 0 20 40">
<g fill="#ffff00" stroke="#c0a000" stroke-width="0.5">
<rect x="2" y="2" width="3" height="3"/><rect x="8" y="2" width="3" height="3"/><rect x="14" y="2" width="3" height="3"/>
<rect x="2" y="8" width="3" height="3"/><rect x="14" y="8" width="3" height="3"/>
<rect x="2" y="14" width="3" height="3"/><rect x="8" y="14" width="3" height="3"/><rect x="14" y="14" width="3" height="3"/>
<rect x="2" y="26" width="3" height="3"/><rect x="8" y="26" width="3" height="3"/><rect x="14" y="26" width="3" height="3"/>
<rect x="2" y="32" width="3" height="3"/><rect x="14" y="32" width="3" height="3"/>
<rect x="2" y="38" width="3" height="3"/><rect x="8" y="38" width="3" height="3"/><rect x="14" y="38" width="3" height="3"/>
</g>
<path d="M3,12 Q8,7 10,12 T17,10" fill="none" stroke="#2080ff" stroke-width="1.2"/>
<path d="M3,36 Q8,31 10,36 M11,30 L17,36" fill="none" stroke="#2080ff" stroke-width="1.2"/>
</svg>
<div class="mi" style="top:285px">Unir</div>
<div class="mi" style="top:309px">Explotar</div>
<div class="ms" style="top:335px"></div>
<div class="mi" style="top:338px">Información de entidades</div>
<div class="ms" style="top:364px"></div>
<svg class="a" style="left:5px;top:371px" width="18" height="45" viewBox="0 0 18 45">
<path d="M2.5,2.5 H8 L9.5,4 V11.5 H2.5 Z" fill="#fff" stroke="#333" stroke-width="0.9"/>
<path d="M6.5,6.5 H12 L14.5,9 V16.5 H6.5 Z" fill="#fff" stroke="#333" stroke-width="0.9"/>
<path d="M4,5 H7 M4,7 H7 M8,10 H12 M8,12 H13 M8,14 H13" stroke="#555" stroke-width="0.7"/>
<path d="M6,24 L10,33 M12,24 L8,33" stroke="#555" stroke-width="0.9"/>
<circle cx="7" cy="35.5" r="2.3" fill="none" stroke="#4040c0" stroke-width="1"/><circle cx="11" cy="35.5" r="2.3" fill="none" stroke="#4040c0" stroke-width="1"/>
</svg>
<div class="mi" style="top:367px">Copiar</div><div class="sc" style="top:367px">Ctrl+C</div>
<div class="mi" style="top:391px">Cortar</div><div class="sc" style="top:391px">Ctrl+X</div>
<div class="a" style="left:1px;top:415px;width:256px;height:25px;background:#b8d7f4;border:1px solid #3a8ee6"></div>
<div class="a" style="left:2px;top:416px;width:22px;height:23px;background:#e8f0f8"></div>
<svg class="a" style="left:3px;top:418px" width="20" height="18" viewBox="0 0 20 18">
<rect x="1.5" y="3.5" width="11" height="13" fill="#f0c020" stroke="#000" stroke-width="1"/>
<rect x="4.5" y="1.5" width="5" height="3" fill="#aaa" stroke="#000" stroke-width="0.9"/>
<path d="M7.5,8.5 H14.5 L17.5,11 V17 H7.5 Z" fill="#fff" stroke="#000" stroke-width="1"/>
<path d="M9,12 H15 M9,14 H15" stroke="#3050c0" stroke-width="0.9"/>
</svg>
<div class="mi" style="top:415px">Pegar</div><div class="sc" style="top:415px">Ctrl+V</div>
</div>

<style>.cb{position:absolute;background:#fff;border:1px solid;border-color:#a0a0a0 #fff #fff #a0a0a0;font-size:12px;line-height:20px;padding-left:3px;white-space:nowrap}</style>
<div class="a" style="left:2px;top:1004px;width:375px;height:33px;background:#fff"></div>
<div class="a" style="left:5px;top:1026px;font-size:11.5px;line-height:13px;white-space:nowrap">2 elementos pegados</div>
<div class="a" style="left:0;top:1040px;width:48px;height:2px;background:#000"></div>
<div class="a" style="left:392px;top:1039px;width:1527px;height:1px;background:#fafafa"></div>
<div class="a" style="left:392px;top:1040px;width:1527px;height:2px;background:#000"></div>
<div class="a" style="left:688px;top:1040px;width:48px;height:2px;background:#2a2f36"></div>
<div class="a" style="left:381px;top:1005px;width:108px;height:32px;background:#d6e0ea;border:2px solid #1a7fd6"></div>
<div class="a" style="left:416px;top:1005px;width:2px;height:32px;background:#1a7fd6"></div>
<div class="a" style="left:452px;top:1005px;width:2px;height:32px;background:#1a7fd6"></div>
<svg class="a" style="left:381px;top:1005px" width="108" height="32" viewBox="381 1005 108 32">
<defs>
<linearGradient id="gb" x1="0" x2="1"><stop offset="0" stop-color="#7080d8"/><stop offset="0.5" stop-color="#c0c8f8"/><stop offset="1" stop-color="#7080c8"/></linearGradient>
<linearGradient id="gp" x1="0" x2="1"><stop offset="0" stop-color="#e050b0"/><stop offset="0.5" stop-color="#f8a8e0"/><stop offset="1" stop-color="#d050a8"/></linearGradient>
</defs>
<g>
<rect x="395" y="1011" width="8" height="8" fill="#000" opacity="0.8"/>
<rect x="394" y="1010" width="6" height="8.5" fill="url(#gb)" stroke="#8890f0" stroke-width="0.6"/>
<rect x="401" y="1014" width="8" height="7" fill="#000"/>
<rect x="400" y="1013" width="7" height="6.5" fill="url(#gb)" stroke="#8890f0" stroke-width="0.6"/>
</g>
<path d="M388,1029 Q389,1035 393,1033 Q397,1031 399,1030 Q403,1027 406.5,1034" fill="none" stroke="#000" stroke-width="1.8"/>
<path d="M388,1028.5 Q389,1034 393,1032 Q397,1030 399,1029 Q403,1026.5 406,1033" fill="none" stroke="#ff00ff" stroke-width="1.1"/>
<g>
<rect x="431" y="1011" width="8" height="8" fill="#000" opacity="0.8"/>
<rect x="430" y="1010" width="6" height="8.5" fill="url(#gb)" stroke="#ff00ff" stroke-width="1"/>
<rect x="437" y="1014" width="8" height="7" fill="#000"/>
<rect x="436" y="1013" width="7" height="6.5" fill="url(#gb)" stroke="#ff00ff" stroke-width="1"/>
</g>
<path d="M424,1029 Q425,1035 429,1033 Q433,1031 435,1030 Q439,1027 442.5,1034" fill="none" stroke="#000" stroke-width="1.8"/>
<path d="M424,1028.5 Q425,1034 429,1032 Q433,1030 435,1029 Q439,1026.5 442,1033" fill="none" stroke="#4040ff" stroke-width="1.1"/>
<g>
<rect x="467" y="1011" width="8" height="8" fill="#000" opacity="0.8"/>
<rect x="466" y="1010" width="6" height="8.5" fill="url(#gp)" stroke="#8890f0" stroke-width="0.6"/>
<rect x="473" y="1014" width="8" height="7" fill="#000"/>
<rect x="472" y="1013" width="7" height="6.5" fill="url(#gp)" stroke="#8890f0" stroke-width="0.6"/>
</g>
<path d="M460,1029 Q461,1035 465,1033 Q469,1031 471,1030 Q475,1027 478.5,1034" fill="none" stroke="#000" stroke-width="1.8"/>
<path d="M460,1028.5 Q461,1034 465,1032 Q469,1030 471,1029 Q475,1026.5 478,1033" fill="none" stroke="#4040ff" stroke-width="1.1"/>
</svg>
<div class="cb" style="left:489px;top:1010px;width:64px;height:22px">Modelo</div>
<div class="a" style="left:536px;top:1011px;width:17px;height:20px;background:#e8e8e8;border:1px solid #c8c8c8"></div>
<div class="a" style="left:540px;top:1019px;border-left:4px solid transparent;border-right:4px solid transparent;border-top:5px solid #000"></div>
<div class="cb" style="left:555px;top:1008px;width:66px;height:25px;line-height:18px">0</div>
<div class="a" style="left:601px;top:1010px;width:17px;height:21px;background:#e8e8e8;border:1px solid #c8c8c8"></div>
<div class="a" style="left:605px;top:1019px;border-left:4px solid transparent;border-right:4px solid transparent;border-top:5px solid #000"></div>
<svg class="a" style="left:625px;top:1005px" width="620" height="32" viewBox="625 1005 620 32">
<!-- keyboard -->
<rect x="630.5" y="1016.5" width="25" height="14" rx="2" fill="#f0f0f0" stroke="#444" stroke-width="1.2"/>
<path d="M633,1020 H653 M633,1023 H653 M633,1026 H653" stroke="#444" stroke-width="1.2" stroke-dasharray="1.2 0.8"/>
<path d="M636,1028.5 H650" stroke="#444" stroke-width="1.2"/>
<path d="M643,1016 Q643,1013 646,1012 V1009" fill="none" stroke="#444" stroke-width="0.9"/>
<!-- check -->
<path d="M670,1022 L677.5,1031 L690,1011" fill="none" stroke="#4a7a30" stroke-width="5.5" stroke-linejoin="round"/>
<path d="M670,1022 L677.5,1031 L690,1011" fill="none" stroke="#8cc850" stroke-width="3.8" stroke-linejoin="round"/>
<!-- ESC -->
<path d="M709,1009 H719 L726,1016 V1024 L719,1031 H709 L702,1024 V1016 Z" fill="#e02020" stroke="#a01010" stroke-width="0.8"/>
<path d="M709.5,1010.5 H718.5 L724.5,1016.5 V1023.5 L718.5,1029.5 H709.5 L703.5,1023.5 V1016.5 Z" fill="none" stroke="#fff" stroke-width="0.8"/>
<text x="705" y="1024.5" font-family="Liberation Sans" font-size="9.5" fill="#fff" letter-spacing="-0.6" transform="translate(705 1024.5) scale(0.85 1) translate(-705 -1024.5)">ESC</text>
<!-- cursor x -->
<path d="M742,1014 L742,1028 L745.5,1025 L748.5,1031 L750.5,1030 L747.5,1024 L752,1024 Z" fill="#333" stroke="#888" stroke-width="0.6"/>
<path d="M753,1010 L760,1017 M760,1010 L753,1017" stroke="#e02020" stroke-width="1.8"/>
<!-- zoom + -->
<circle cx="786" cy="1021" r="4.5" fill="#fff" stroke="#333" stroke-width="1.2"/>
<path d="M789.5,1024.5 L796,1031" stroke="#333" stroke-width="2.4"/>
<path d="M793,1012 H800 M796.5,1008.5 V1015.5 M793,1018 H800" stroke="#2040e0" stroke-width="1"/>
<!-- zoom window -->
<rect x="814.5" y="1011.5" width="14" height="11" fill="none" stroke="#2040e0" stroke-width="1" stroke-dasharray="2 1"/>
<circle cx="828" cy="1025" r="4.5" fill="#fff" stroke="#333" stroke-width="1.2"/>
<path d="M826,1025 H830 M828,1023 V1027" stroke="#333" stroke-width="0.9"/>
<path d="M831,1028 L838,1034" stroke="#333" stroke-width="2.2"/>
<!-- fit -->
<rect x="851.5" y="1010.5" width="20" height="19" fill="#fff" stroke="#2030c0" stroke-width="1.2"/>
<path d="M853,1012.5 H870" stroke="#2030c0" stroke-width="2"/>
<path d="M861.5,1015 V1028 M854,1021.5 H869" stroke="#2090ff" stroke-width="1.6"/>
<path d="M861.5,1014 l-2.5,3 h5z M861.5,1029 l-2.5,-3 h5z M853,1021.5 l3,-2.5 v5z M870,1021.5 l-3,-2.5 v5z" fill="#2090ff"/>
<path d="M851,1032 H872" stroke="#bbb" stroke-width="1" stroke-dasharray="1 1"/>
<!-- rotate 3D -->
<path d="M893,1012 Q885,1016 887,1026 Q891,1033 900,1031" fill="none" stroke="#2050d0" stroke-width="3"/>
<circle cx="900" cy="1020" r="5.5" fill="#a0c8f0" stroke="#2050d0" stroke-width="1"/>
<path d="M899,1009 V1031 M906,1020 H911" stroke="#333" stroke-width="0.7" stroke-dasharray="1.5 1"/>
<!-- pan -->
<path d="M934.5,1011 V1029 M925.5,1020 H943.5" stroke="#2090ff" stroke-width="1.8"/>
<path d="M934.5,1009.5 l-3.5,4 h7z M934.5,1030.5 l-3.5,-4 h7z M924,1020 l4,-3.5 v7z M945,1020 l-4,-3.5 v7z" fill="#2090ff"/>
<path d="M932,1034 l6,-6 M936,1034 l5,-5" stroke="#bbb" stroke-width="0.9"/>
<!-- axes -->
<path d="M971,1009 V1023 M971,1023 L961,1032 M971,1023 L982,1032" stroke="#333" stroke-width="1" fill="none"/>
<path d="M962,1032 L971,1024 L981,1032 Z" fill="#7ab8f0" opacity="0.8"/>
<text x="962" y="1020" font-family="Liberation Mono" font-size="7" fill="#2030a0">x</text><text x="977" y="1020" font-family="Liberation Mono" font-size="7" fill="#2030a0">y</text>
<path d="M990.5,1019.5 h6 l-3,3z" fill="#000"/>
<!-- cube 1 -->
<path d="M1009.5,1015.5 L1014,1011 H1030 V1027 L1025.5,1031.5 H1009.5 Z M1009.5,1015.5 H1025.5 V1031.5 M1025.5,1015.5 L1030,1011" fill="#fff" stroke="#2030c0" stroke-width="1.2"/>
<path d="M1014,1012 V1027 H1029" stroke="#2030c0" stroke-width="0.8" stroke-dasharray="1 1.5" fill="none"/>
<path d="M1040,1019.5 h6 l-3,3z" fill="#000"/>
<!-- cube 2 -->
<path d="M1056.5,1015.5 L1061,1011 H1077 L1072.5,1015.5 Z" fill="#60e8f8" stroke="#2030c0" stroke-width="1"/>
<path d="M1056.5,1015.5 H1072.5 V1031.5 H1056.5 Z M1072.5,1015.5 L1077,1011 V1027 L1072.5,1031.5" fill="#fff" stroke="#2030c0" stroke-width="1.2"/>
<path d="M1061,1012 V1027 H1076" stroke="#2030c0" stroke-width="0.8" stroke-dasharray="1 1.5" fill="none"/>
<path d="M1088,1019.5 h6 l-3,3z" fill="#000"/>
<!-- disabled icons -->
<path d="M1110,1016 Q1113,1014 1118,1023 Q1123,1014 1129,1016 L1125,1030 H1114 Z" fill="#c8c8c8" stroke="#b0b0b0" stroke-width="1"/>
<path d="M1141,1019.5 h6 l-3,3z" fill="#b0b0b0"/>
<circle cx="1166" cy="1024" r="5" fill="none" stroke="#a8a8a8" stroke-width="1.6"/>
<path d="M1155,1032 L1173,1011" stroke="#a8a8a8" stroke-width="1.2"/>
<path d="M1186,1029.5 H1204 M1195,1010 V1029 M1195,1021 H1202 V1029" fill="none" stroke="#a8a8a8" stroke-width="1.8"/>
<path d="M1218,1032 L1235,1013 M1230,1012 H1237 M1233.5,1009 V1015" stroke="#a8a8a8" stroke-width="1.2"/>
</svg>
<div class="a" style="left:1852px;top:1007px;font-size:10px;line-height:10px;color:#000080;letter-spacing:0.9px;white-space:nowrap">X 40,771<br>Y -33,048<br>Z 0</div>

</body></html>
